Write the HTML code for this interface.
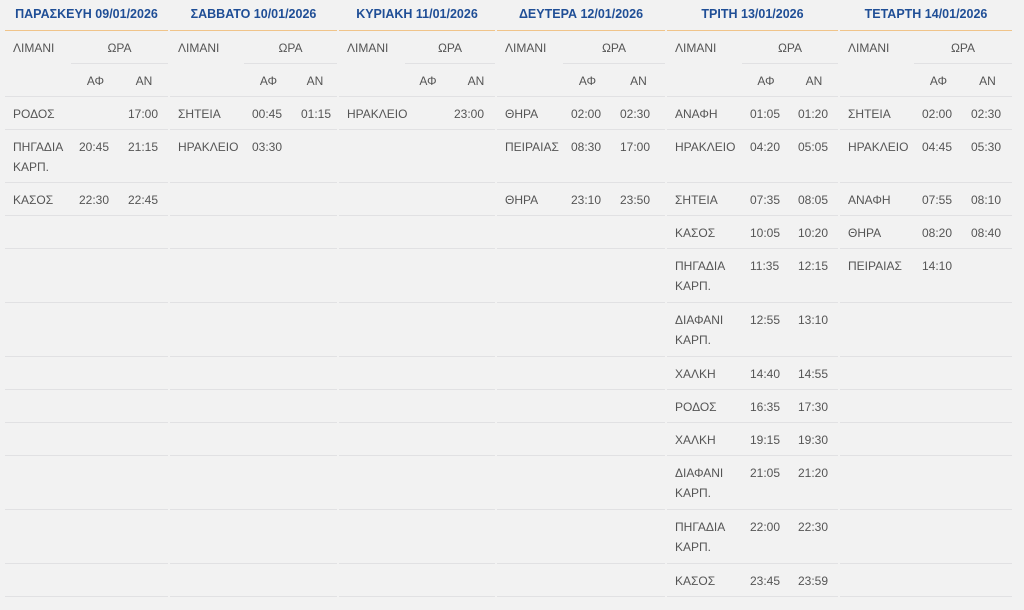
<!DOCTYPE html><html><head><meta charset="utf-8"><style>
*{box-sizing:border-box;margin:0;padding:0}
body{width:1024px;height:610px;background:#f2f2f2;font-family:"Liberation Sans","DejaVu Sans",sans-serif;font-size:12px;color:#555;position:relative;overflow:hidden}
.c{position:absolute;top:0}
.h{height:31px;border-bottom:1px solid #f0c48a;color:#1f4e96;font-weight:bold;font-size:12.5px;text-align:center;padding-top:7px;white-space:nowrap}
.r{display:flex;border-bottom:1px solid #e1e1e3}
.r span{display:block;padding:7px 0 0 8px;line-height:20px;white-space:nowrap}
.hd{height:66px;position:relative;border-bottom:1px solid #e1e1e3}
.hd .p{position:absolute;left:8px;top:10px}
.hd .w{position:absolute;top:0;height:33px;border-bottom:1px solid #e1e1e3;text-align:center;padding-top:10px}
.hd .a,.hd .n{position:absolute;top:43px;text-align:center}
.h33{height:33px}.h53{height:53px}.h54{height:54px}
</style></head><body>

<div class="c" style="left:5px;width:163px">
<div class="h">ΠΑΡΑΣΚΕΥΗ 09/01/2026</div>
<div class="hd"><span class="p">ΛΙΜΑΝΙ</span><div class="w" style="left:66px;width:97px">ΩΡΑ</div><span class="a" style="left:66px;width:49px">ΑΦ</span><span class="n" style="left:115px;width:48px">ΑΝ</span></div>
<div class="r h33"><span style="width:66px">ΡΟΔΟΣ</span><span style="width:49px"></span><span>17:00</span></div>
<div class="r h53"><span style="width:66px">ΠΗΓΑΔΙΑ<br>ΚΑΡΠ.</span><span style="width:49px">20:45</span><span>21:15</span></div>
<div class="r h33"><span style="width:66px">ΚΑΣΟΣ</span><span style="width:49px">22:30</span><span>22:45</span></div>
<div class="r h33"></div><div class="r h54"></div><div class="r h54"></div><div class="r h33"></div><div class="r h33"></div><div class="r h33"></div><div class="r h54"></div><div class="r h54"></div><div class="r h33"></div>
</div>

<div class="c" style="left:170px;width:167px">
<div class="h">ΣΑΒΒΑΤΟ 10/01/2026</div>
<div class="hd"><span class="p">ΛΙΜΑΝΙ</span><div class="w" style="left:74px;width:93px">ΩΡΑ</div><span class="a" style="left:74px;width:49px">ΑΦ</span><span class="n" style="left:123px;width:44px">ΑΝ</span></div>
<div class="r h33"><span style="width:74px">ΣΗΤΕΙΑ</span><span style="width:49px">00:45</span><span>01:15</span></div>
<div class="r h53"><span style="width:74px">ΗΡΑΚΛΕΙΟ</span><span style="width:49px">03:30</span><span></span></div>
<div class="r h33"></div><div class="r h33"></div><div class="r h54"></div><div class="r h54"></div><div class="r h33"></div><div class="r h33"></div><div class="r h33"></div><div class="r h54"></div><div class="r h54"></div><div class="r h33"></div>
</div>

<div class="c" style="left:339px;width:156px">
<div class="h">ΚΥΡΙΑΚΗ 11/01/2026</div>
<div class="hd"><span class="p">ΛΙΜΑΝΙ</span><div class="w" style="left:66px;width:90px">ΩΡΑ</div><span class="a" style="left:74px;width:30px">ΑΦ</span><span class="n" style="left:115px;width:44px">ΑΝ</span></div>
<div class="r h33"><span style="width:107px">ΗΡΑΚΛΕΙΟ</span><span>23:00</span></div>
<div class="r h53"></div><div class="r h33"></div><div class="r h33"></div><div class="r h54"></div><div class="r h54"></div><div class="r h33"></div><div class="r h33"></div><div class="r h33"></div><div class="r h54"></div><div class="r h54"></div><div class="r h33"></div>
</div>

<div class="c" style="left:497px;width:168px">
<div class="h">ΔΕΥΤΕΡΑ 12/01/2026</div>
<div class="hd"><span class="p">ΛΙΜΑΝΙ</span><div class="w" style="left:66px;width:102px">ΩΡΑ</div><span class="a" style="left:66px;width:49px">ΑΦ</span><span class="n" style="left:115px;width:53px">ΑΝ</span></div>
<div class="r h33"><span style="width:66px">ΘΗΡΑ</span><span style="width:49px">02:00</span><span>02:30</span></div>
<div class="r h53"><span style="width:66px">ΠΕΙΡΑΙΑΣ</span><span style="width:49px">08:30</span><span>17:00</span></div>
<div class="r h33"><span style="width:66px">ΘΗΡΑ</span><span style="width:49px">23:10</span><span>23:50</span></div>
<div class="r h33"></div><div class="r h54"></div><div class="r h54"></div><div class="r h33"></div><div class="r h33"></div><div class="r h33"></div><div class="r h54"></div><div class="r h54"></div><div class="r h33"></div>
</div>

<div class="c" style="left:667px;width:171px">
<div class="h">ΤΡΙΤΗ 13/01/2026</div>
<div class="hd"><span class="p">ΛΙΜΑΝΙ</span><div class="w" style="left:75px;width:96px">ΩΡΑ</div><span class="a" style="left:75px;width:48px">ΑΦ</span><span class="n" style="left:123px;width:48px">ΑΝ</span></div>
<div class="r h33"><span style="width:75px">ΑΝΑΦΗ</span><span style="width:48px">01:05</span><span>01:20</span></div>
<div class="r h53"><span style="width:75px">ΗΡΑΚΛΕΙΟ</span><span style="width:48px">04:20</span><span>05:05</span></div>
<div class="r h33"><span style="width:75px">ΣΗΤΕΙΑ</span><span style="width:48px">07:35</span><span>08:05</span></div>
<div class="r h33"><span style="width:75px">ΚΑΣΟΣ</span><span style="width:48px">10:05</span><span>10:20</span></div>
<div class="r h54"><span style="width:75px">ΠΗΓΑΔΙΑ<br>ΚΑΡΠ.</span><span style="width:48px">11:35</span><span>12:15</span></div>
<div class="r h54"><span style="width:75px">ΔΙΑΦΑΝΙ<br>ΚΑΡΠ.</span><span style="width:48px">12:55</span><span>13:10</span></div>
<div class="r h33"><span style="width:75px">ΧΑΛΚΗ</span><span style="width:48px">14:40</span><span>14:55</span></div>
<div class="r h33"><span style="width:75px">ΡΟΔΟΣ</span><span style="width:48px">16:35</span><span>17:30</span></div>
<div class="r h33"><span style="width:75px">ΧΑΛΚΗ</span><span style="width:48px">19:15</span><span>19:30</span></div>
<div class="r h54"><span style="width:75px">ΔΙΑΦΑΝΙ<br>ΚΑΡΠ.</span><span style="width:48px">21:05</span><span>21:20</span></div>
<div class="r h54"><span style="width:75px">ΠΗΓΑΔΙΑ<br>ΚΑΡΠ.</span><span style="width:48px">22:00</span><span>22:30</span></div>
<div class="r h33"><span style="width:75px">ΚΑΣΟΣ</span><span style="width:48px">23:45</span><span>23:59</span></div>
</div>

<div class="c" style="left:840px;width:172px">
<div class="h">ΤΕΤΑΡΤΗ 14/01/2026</div>
<div class="hd"><span class="p">ΛΙΜΑΝΙ</span><div class="w" style="left:74px;width:98px">ΩΡΑ</div><span class="a" style="left:74px;width:49px">ΑΦ</span><span class="n" style="left:123px;width:49px">ΑΝ</span></div>
<div class="r h33"><span style="width:74px">ΣΗΤΕΙΑ</span><span style="width:49px">02:00</span><span>02:30</span></div>
<div class="r h53"><span style="width:74px">ΗΡΑΚΛΕΙΟ</span><span style="width:49px">04:45</span><span>05:30</span></div>
<div class="r h33"><span style="width:74px">ΑΝΑΦΗ</span><span style="width:49px">07:55</span><span>08:10</span></div>
<div class="r h33"><span style="width:74px">ΘΗΡΑ</span><span style="width:49px">08:20</span><span>08:40</span></div>
<div class="r h54"><span style="width:74px">ΠΕΙΡΑΙΑΣ</span><span style="width:49px">14:10</span><span></span></div>
<div class="r h54"></div><div class="r h33"></div><div class="r h33"></div><div class="r h33"></div><div class="r h54"></div><div class="r h54"></div><div class="r h33"></div>
</div>

</body></html>
